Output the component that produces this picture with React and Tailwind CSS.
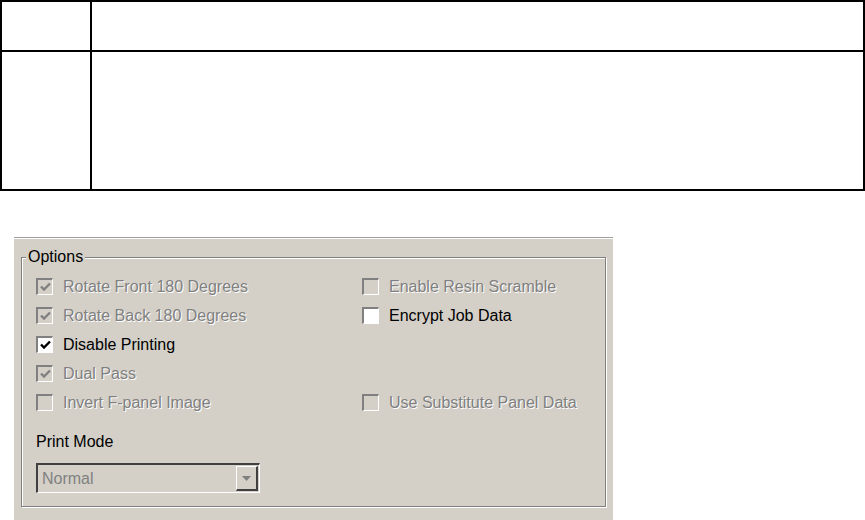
import React from "react";

const font = { fontFamily: '"Liberation Sans", Arial, sans-serif' };

function Check({ checked, disabled }) {
  return (
    <span
      className={`relative flex h-[17px] w-[17px] shrink-0 items-center justify-center border-t-2 border-l-2 border-b border-r border-t-[#808080] border-l-[#808080] border-b-white border-r-white ${
        disabled ? "bg-[#d4d0c8]" : "bg-white"
      }`}
    >
      {checked && (
        <svg width="11" height="10" viewBox="0 0 11 10">
          <path
            d="M1 4.5 L4 7.5 L10 1.5"
            fill="none"
            stroke={disabled ? "#808080" : "#000"}
            strokeWidth="2.4"
          />
        </svg>
      )}
    </span>
  );
}

function Option({ label, checked, disabled }) {
  return (
    <div className="flex h-[29px] items-center gap-[10px]">
      <Check checked={checked} disabled={disabled} />
      <span
        className={`text-[16px] leading-none ${
          disabled ? "text-[#808080] [text-shadow:1px_1px_0_#ffffff]" : "text-black"
        }`}
      >
        {label}
      </span>
    </div>
  );
}

export default function App() {
  return (
    <div className="h-[520px] w-[865px] overflow-hidden bg-white" style={font}>
      <div className="grid w-[865px] grid-cols-[90px_1fr] border-2 border-black">
        <div className="h-[50px] border-r-2 border-b-2 border-black" />
        <div className="h-[50px] border-b-2 border-black" />
        <div className="h-[137px] border-r-2 border-black" />
        <div className="h-[137px]" />
      </div>

      <div className="ml-[14px] mt-[46px] h-[283px] w-[599px] border-t border-t-[#a0a0a0] bg-[#d4d0c8] pl-[7px] pr-[7px] pt-[19px] shadow-[inset_0_1px_0_#ffffff]">
        <div className="relative h-[250px] border border-[#808080] shadow-[1px_1px_0_#ffffff,inset_1px_1px_0_#ffffff]">
          <span className="absolute -top-[9px] left-[4px] bg-[#d4d0c8] px-[2px] text-[16px] leading-[16px] text-black">
            Options
          </span>
          <div className="grid grid-cols-[326px_1fr] pl-[14px] pt-[14px]">
            <div className="flex flex-col">
              <Option label="Rotate Front 180 Degrees" checked disabled />
              <Option label="Rotate Back 180 Degrees" checked disabled />
              <Option label="Disable Printing" checked />
              <Option label="Dual Pass" checked disabled />
              <Option label="Invert F-panel Image" disabled />
            </div>
            <div className="flex flex-col">
              <Option label="Enable Resin Scramble" disabled />
              <Option label="Encrypt Job Data" />
              <div className="h-[29px]" />
              <div className="h-[29px]" />
              <Option label="Use Substitute Panel Data" disabled />
            </div>
          </div>
          <div className="pl-[14px] pt-[16px] text-[16px] leading-[18px] text-black">Print Mode</div>
          <div className="ml-[14px] mt-[12px] flex h-[30px] w-[224px] items-stretch border-t-2 border-l-2 border-b border-r border-t-[#404040] border-l-[#404040] border-b-white border-r-white bg-[#d4d0c8]">
            <span className="flex flex-1 items-center pl-[4px] text-[16px] text-[#808080]">Normal</span>
            <span className="m-[1px] flex w-[22px] items-center justify-center border-r-2 border-b-2 border-r-[#404040] border-b-[#404040] border-t border-l border-t-white border-l-white bg-[#d4d0c8]">
              <svg width="9" height="5" viewBox="0 0 9 5">
                <path d="M0 0 H9 L4.5 5 Z" fill="#808080" />
              </svg>
            </span>
          </div>
        </div>
      </div>
    </div>
  );
}
